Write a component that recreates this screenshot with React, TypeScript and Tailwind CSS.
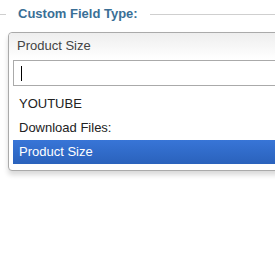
export default function App() {
  const options = ["YOUTUBE", "Download Files:", "Product Size"];
  const selected = "Product Size";

  return (
    <div className="relative h-[275px] w-[275px] overflow-hidden bg-white font-['Liberation_Sans',Arial,sans-serif]">
      <div className="flex items-center pt-[5px]">
        <div className="h-px w-[6px] bg-[#cfcfcf]" />
        <span className="px-[12px] text-[13px] font-bold leading-[18px] text-[#3a6f96]">
          Custom Field Type:
        </span>
        <div className="h-px flex-1 bg-[#cfcfcf]" />
      </div>

      <div className="mt-[9px] ml-[8px] w-[320px] rounded-l-[4px] border border-[#aaa] bg-white shadow-[0_4px_5px_rgba(0,0,0,0.15)]">
        <div className="flex h-[26px] items-center rounded-tl-[4px] bg-gradient-to-b from-[#eeeeee] to-white pl-[8px] text-[13px] text-[#444]">
          Product Size
        </div>
        <div className="px-[4px] pt-px">
          <div className="flex h-[26px] items-center border border-[#aaa] bg-white pl-[7px]">
            <span className="h-[15px] w-px bg-black" />
          </div>
        </div>
        <ul className="mx-[4px] mt-[6px] mb-[6px]">
          {options.map((o) => (
            <li
              key={o}
              className={
                o === selected
                  ? "flex h-[24px] items-center bg-gradient-to-b from-[#3875d7] to-[#2a62bc] pl-[6px] text-[13px] text-white"
                  : "flex h-[24px] items-center pl-[6px] text-[13px] text-[#222]"
              }
            >
              {o}
            </li>
          ))}
        </ul>
      </div>
    </div>
  );
}
